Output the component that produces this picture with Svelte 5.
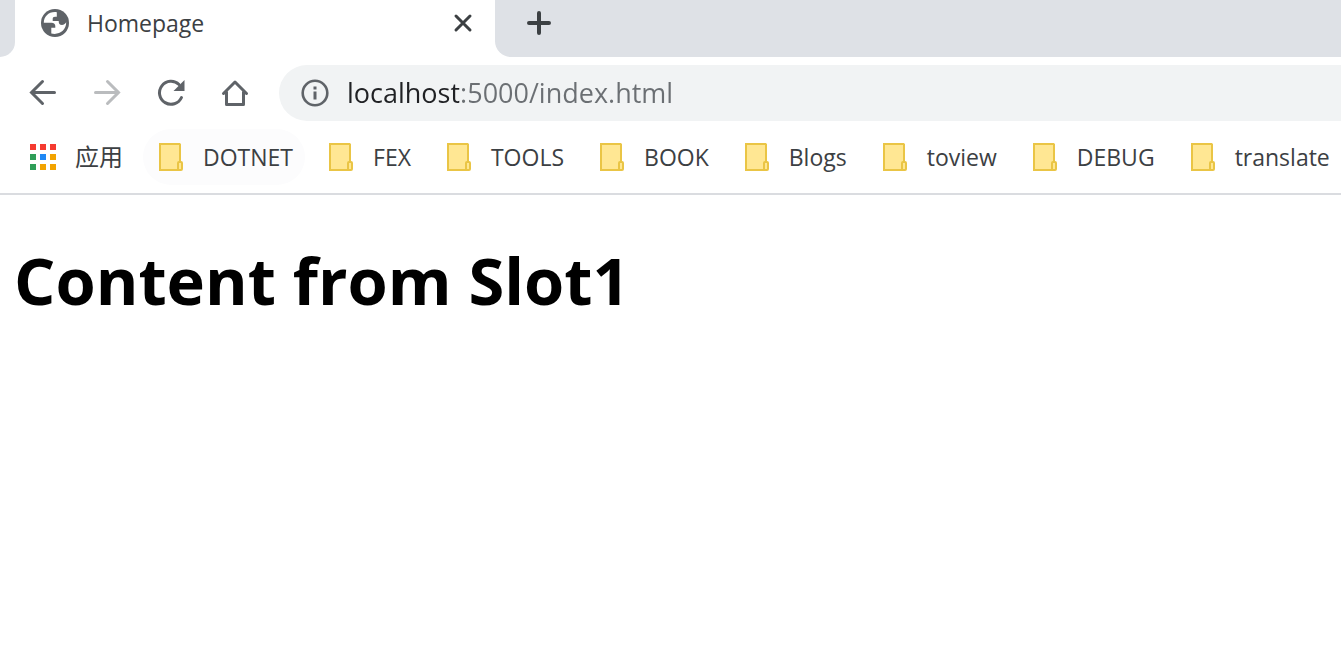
<script>
  const folders = ['DOTNET', 'FEX', 'TOOLS', 'BOOK', 'Blogs', 'toview', 'DEBUG', 'translate'];
  const appColors = ['#f53b30', '#f53b30', '#f53b30', '#2f9e58', '#1e88f5', '#f2a300', '#2f9e58', '#f2a300', '#f2a300'];
  let url = $state('localhost:5000/index.html');
</script>

<header>
  <div class="strip">
    <div class="edge"></div>
    <div class="tab">
      <svg width="32" height="32" viewBox="0 0 32 32" aria-hidden="true">
        <circle cx="16" cy="16" r="14" fill="#5f6368" />
        <path fill="#fff" d="M17.800 5.200C10 4.200 4.800 9.500 4.800 15.700H12.500C15 15.700 16.300 17 16.300 19V20.800H12.300V26.400C19.500 28.500 27.300 23.500 27.200 15.300C25.800 17.300 24.800 18 23 18C20.500 18 19.700 16.700 19.700 13.900H13.700V12C13.700 10.500 14.500 9.700 16 9.700H17.800Z" />
      </svg>
      <span class="title">Homepage</span>
      <button aria-label="Close tab">
        <svg width="32" height="32" viewBox="0 0 32 32"><path d="M9 9 23 23M23 9 9 23" stroke="#3c4043" stroke-width="3" stroke-linecap="round" /></svg>
      </button>
    </div>
    <div class="rest">
      <button aria-label="New tab">
        <svg width="32" height="32" viewBox="0 0 32 32"><path d="M16 6V26M6 16H26" stroke="#3c4043" stroke-width="4" stroke-linecap="round" /></svg>
      </button>
    </div>
  </div>

  <div class="toolbar">
    <button aria-label="Back">
      <svg width="32" height="32" viewBox="0 0 32 32" fill="none" stroke="#5f6368" stroke-width="3" stroke-linecap="round"><path d="M27.500 15.500H5M15.500 4.500 4.500 15.500 15.500 26.500" /></svg>
    </button>
    <button aria-label="Forward" disabled>
      <svg width="32" height="32" viewBox="0 0 32 32" fill="none" stroke="#babcbe" stroke-width="3" stroke-linecap="round"><path d="M4.500 15.500H27M16.500 4.500 27.500 15.500 16.500 26.500" /></svg>
    </button>
    <button aria-label="Reload">
      <svg width="32" height="32" viewBox="0 0 32 32"><path d="M26.500 20.500A11.500 11.500 0 1 1 24 7.500" fill="none" stroke="#5f6368" stroke-width="3" stroke-linecap="round" /><path d="M29.500 3V14H18.500z" fill="#5f6368" /></svg>
    </button>
    <button aria-label="Home">
      <svg width="32" height="32" viewBox="0 0 32 32" fill="none" stroke="#5f6368" stroke-width="3" stroke-linejoin="round"><path d="M4.500 16.500 16 5 27.500 16.500M7.500 15V27.500H24.500V15" stroke-linecap="round" /></svg>
    </button>
    <div class="omnibox">
      <svg width="32" height="32" viewBox="0 0 32 32" aria-hidden="true"><circle cx="16" cy="16" r="12.300" fill="none" stroke="#5f6368" stroke-width="2.600" /><path d="M14.500 9.500h3v3h-3zM14.500 14.500h3v8h-3z" fill="#5f6368" /></svg>
      <input type="text" aria-label="Address" spellcheck="false" bind:value={url} />
    </div>
  </div>

  <nav>
    <a href="#apps" class="apps">
      <span class="grid">
        {#each appColors as color}<i style:background={color}></i>{/each}
      </span>
      应用
    </a>
    {#each folders as name, i}
      <a href="#{name}" class:hovered={i === 0}>
        <svg width="24" height="28" viewBox="0 0 24 28" aria-hidden="true">
          <path d="M1 1H20.500L21 1.500V27H1z" fill="#ffe793" stroke="#eac545" stroke-width="2" />
          <rect x="19" y="19" width="4" height="8" rx="1" fill="#ffe793" stroke="#eac545" stroke-width="2" />
        </svg>
        {name}
      </a>
    {/each}
  </nav>
</header>

<main>
  <h1>Content from Slot1</h1>
</main>

<style>
  :global(body) {
    margin: 0;
    background: #fff;
    font-family: 'Open Sans', 'Noto Sans', 'Noto Sans CJK SC', sans-serif;
    overflow-x: hidden;
  }
  svg {
    display: block;
    flex: none;
  }
  button {
    display: block;
    padding: 0;
    border: 0;
    background: none;
  }
  .strip {
    display: flex;
    height: 57px;
  }
  .edge {
    flex: none;
    width: 15px;
    background: #dee1e6;
    border-bottom-right-radius: 16px;
  }
  .tab {
    flex: 0 1 480px;
    box-sizing: border-box;
    display: flex;
    align-items: center;
    gap: 16px;
    padding: 0 16px 11px 24px;
  }
  .title {
    flex: 1;
    font-size: 23px;
    line-height: 32px;
    color: #3c4043;
  }
  .rest {
    flex: 1;
    display: flex;
    align-items: center;
    padding: 0 28px 11px;
    background: #dee1e6;
    border-bottom-left-radius: 16px;
  }
  .toolbar {
    display: flex;
    align-items: center;
    gap: 32px;
    padding: 8px 0 8px 27px;
  }
  .omnibox {
    flex: 1;
    display: flex;
    align-items: center;
    gap: 16px;
    height: 56px;
    margin-left: -4px;
    padding-left: 20px;
    background: #f1f3f4;
    border-radius: 28px 0 0 28px;
  }
  input {
    flex: 1;
    min-width: 0;
    padding: 0;
    border: 0;
    outline: 0;
    font: 27px/40px 'Open Sans', 'Noto Sans', sans-serif;
    color: transparent;
    caret-color: #202124;
    background: linear-gradient(90deg, #202124 112px, #6b6f73 112px);
    background-clip: text;
  }
  nav {
    display: flex;
    padding: 0 0 8px 14px;
    border-bottom: 2px solid #dadce0;
    overflow: hidden;
  }
  nav a {
    flex: none;
    display: flex;
    align-items: center;
    gap: 20px;
    height: 56px;
    padding: 0 12px 0 16px;
    margin-right: 8px;
    border-radius: 28px;
    font-size: 23px;
    line-height: 32px;
    color: #3c4043;
    text-decoration: none;
  }
  .hovered {
    background: #fcfcfd;
  }
  nav .apps {
    gap: 19px;
    font-size: 24px;
  }
  .grid {
    display: grid;
    grid-template-columns: repeat(3, 6px);
    gap: 4px;
  }
  .grid i {
    height: 6px;
  }
  main {
    padding: 0 14px;
  }
  h1 {
    margin: 40px 0;
    font-size: 65px;
    line-height: 90px;
    color: #000;
  }
</style>
